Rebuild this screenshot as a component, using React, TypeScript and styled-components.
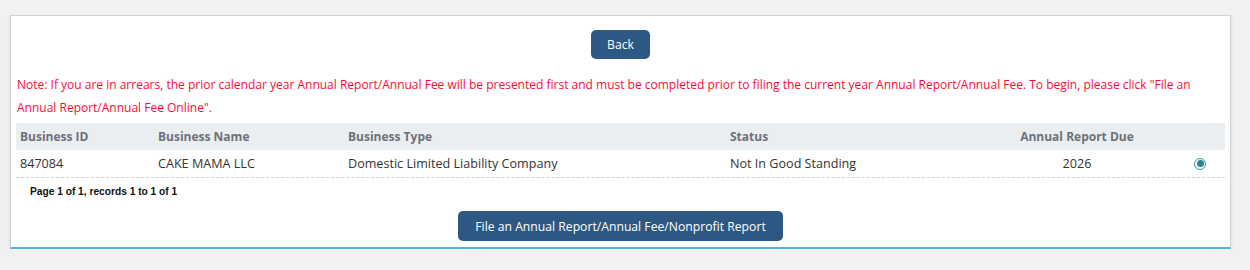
import React from "react";
import styled, { createGlobalStyle } from "styled-components";

const Global = createGlobalStyle`
  html, body { margin: 0; padding: 0; background: #f1f1f1; }
  body { font-family: "Open Sans", "Noto Sans", sans-serif; }
`;

const Page = styled.div`
  padding: 15px 19px 0 10px;
`;

const Panel = styled.div`
  background: #fff;
  border: 1px solid #d3d3d3;
  border-bottom: 2px solid #4cb8d6;
  box-shadow: 0 2px 3px rgba(0, 0, 0, 0.12);
  padding: 14px 5px 6px 5px;
  display: flex;
  flex-direction: column;
`;

const Center = styled.div<{ $mt?: number }>`
  display: flex;
  justify-content: center;
  margin-top: ${(p) => p.$mt ?? 0}px;
`;

const Button = styled.button<{ $w: number; $h: number }>`
  width: ${(p) => p.$w}px;
  height: ${(p) => p.$h}px;
  background: #2d5883;
  color: #fff;
  border: none;
  border-radius: 5px;
  font-family: "Open Sans", "Noto Sans", sans-serif;
  font-size: 12.2px;
  padding: 0;
  cursor: pointer;
`;

const Note = styled.p`
  margin: 14px 0 0 1px;
  color: #ff0a36;
  font-size: 12px;
  line-height: 23px;
`;

const Table = styled.div`
  margin-top: 4px;
  display: flex;
  flex-direction: column;
`;

const cols = "138px 190px 382px 254px 186px 1fr";

const HeadRow = styled.div`
  display: grid;
  grid-template-columns: ${cols};
  height: 27px;
  align-items: center;
  background: #ebeef1;
  padding-left: 4px;
`;

const Row = styled.div`
  display: grid;
  grid-template-columns: ${cols};
  height: 27px;
  align-items: center;
  border-bottom: 1px dashed #cfcfcf;
  padding-left: 4px;
`;

const Th = styled.div<{ $center?: boolean }>`
  font-size: 12px;
  font-weight: 700;
  color: #6d717a;
  text-align: ${(p) => (p.$center ? "center" : "left")};
`;

const Td = styled.div<{ $center?: boolean }>`
  font-size: 12.6px;
  color: #333;
  text-align: ${(p) => (p.$center ? "center" : "left")};
`;

const RadioCell = styled.div`
  display: flex;
  justify-content: flex-end;
  padding-right: 19px;
`;

const Radio = styled.span`
  width: 12px;
  height: 12px;
  box-sizing: border-box;
  border-radius: 50%;
  border: 1.5px solid #3a93a6;
  display: flex;
  align-items: center;
  justify-content: center;
  &::after {
    content: "";
    width: 7px;
    height: 7px;
    border-radius: 50%;
    background: #2a8799;
  }
`;

const Pager = styled.div`
  margin: 8px 0 0 14px;
  font-family: "Liberation Sans", Arial, sans-serif;
  font-size: 10.2px;
  font-weight: 700;
  color: #111;
`;

export default function App() {
  return (
    <>
      <Global />
      <Page>
        <Panel>
          <Center>
            <Button $w={59} $h={29}>Back</Button>
          </Center>
          <Note>
            Note: If you are in arrears, the prior calendar year Annual Report/Annual Fee will be presented first and must be completed prior to filing the current year Annual Report/Annual Fee. To begin, please click "File an Annual Report/Annual Fee Online".
          </Note>
          <Table>
            <HeadRow>
              <Th>Business ID</Th>
              <Th>Business Name</Th>
              <Th>Business Type</Th>
              <Th>Status</Th>
              <Th $center>Annual Report Due</Th>
              <div />
            </HeadRow>
            <Row>
              <Td>847084</Td>
              <Td>CAKE MAMA LLC</Td>
              <Td>Domestic Limited Liability Company</Td>
              <Td>Not In Good Standing</Td>
              <Td $center>2026</Td>
              <RadioCell>
                <Radio />
              </RadioCell>
            </Row>
          </Table>
          <Pager>Page 1 of 1, records 1 to 1 of 1</Pager>
          <Center $mt={14}>
            <Button $w={325} $h={30}>File an Annual Report/Annual Fee/Nonprofit Report</Button>
          </Center>
        </Panel>
      </Page>
    </>
  );
}
